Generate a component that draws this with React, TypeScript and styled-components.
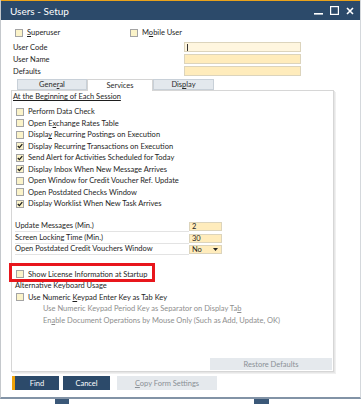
import React from "react";
import styled, { createGlobalStyle } from "styled-components";

const GlobalStyle = createGlobalStyle`
  html, body {
    margin: 0;
    padding: 0;
    background: #ffffff;
  }
  body {
    font-family: Lato, "Liberation Sans", sans-serif;
    font-size: 7.5px;
    color: #1e1e1e;
  }
  u {
    text-underline-offset: 1px;
  }
`;

const Window = styled.div`
  width: 361px;
  height: 399px;
  box-sizing: border-box;
  border-left: 1px solid #c4c8cc;
  border-right: 1px solid #d4d8dc;
  border-bottom: 2px solid #8293a6;
  display: flex;
  flex-direction: column;
  background: #ffffff;
`;

const TitleBar = styled.div`
  height: 20px;
  box-sizing: border-box;
  border-top: 1px solid #e9a21b;
  background: #2c4a6a;
  display: flex;
  align-items: center;
  justify-content: space-between;
  padding: 0 6px 0 9px;
  flex-shrink: 0;
`;

const Title = styled.span`
  color: #ffffff;
  font-size: 10px;
`;

const Controls = styled.div`
  display: flex;
  align-items: center;
  gap: 7px;
`;

const Body = styled.div`
  flex: 1;
  display: flex;
  flex-direction: column;
  padding: 8px 0 0 10px;
`;

const TopRow = styled.div`
  height: 9px;
  display: grid;
  grid-template-columns: 115px auto;
  align-items: center;
  padding-left: 4px;
`;

const CheckItem = styled.label`
  display: flex;
  align-items: center;
  gap: 4px;
  white-space: nowrap;
`;

const Box = styled.span`
  width: 8px;
  height: 8px;
  box-sizing: border-box;
  border: 1px solid #a4a4a4;
  background: #fbf3c9;
  display: inline-flex;
  align-items: center;
  justify-content: center;
  flex-shrink: 0;
`;

const FieldGrid = styled.div`
  margin-top: 5px;
  display: grid;
  grid-template-rows: repeat(3, 10px);
  row-gap: 2px;
`;

const FieldRow = styled.div`
  display: grid;
  grid-template-columns: 171px 117px;
  padding-left: 2px;
  align-items: center;
`;

const Input = styled.div<{ $focus?: boolean }>`
  height: 10px;
  box-sizing: border-box;
  border: 1px solid #dcd4bc;
  background: ${({ $focus }) => ($focus ? "#fff6df" : "#ffecbc")};
  display: flex;
  align-items: center;
  padding-left: 2px;
`;

const Caret = styled.span`
  width: 1px;
  height: 7px;
  background: #333;
`;

const TabStrip = styled.div`
  margin-top: 3px;
  height: 11px;
  display: flex;
  padding-left: 6px;
  position: relative;
  z-index: 1;
`;

const Tab = styled.div<{ $w: number; $active?: boolean }>`
  width: ${({ $w }) => $w}px;
  box-sizing: border-box;
  height: ${({ $active }) => ($active ? 12 : 11)}px;
  display: flex;
  align-items: center;
  justify-content: center;
  background: ${({ $active }) => ($active ? "#ffffff" : "#e3e8ed")};
  border: 1px solid ${({ $active }) => ($active ? "#d4d4d4" : "#c8d0d8")};
  border-bottom: ${({ $active }) => ($active ? "none" : "1px solid #c8d0d8")};
  color: #2a2a2a;
`;

const Panel = styled.div`
  width: 323px;
  height: 282px;
  box-sizing: border-box;
  border: 1px solid #d6d6d6;
  box-shadow: 1px 1px 0 #e6e6e6, 2px 2px 0 #f0f0f0;
  display: flex;
  flex-direction: column;
  padding: 0 1px 1px 0;
`;

const SectionTitle = styled.div`
  height: 12px;
  line-height: 12px;
  padding-left: 1px;
  text-decoration: underline;
  text-underline-offset: 1px;
`;

const CheckList = styled.div`
  margin-top: 3px;
  display: flex;
  flex-direction: column;
`;

const ListRow = styled.div<{ $indent?: number; $muted?: boolean }>`
  height: 11.5px;
  display: flex;
  align-items: center;
  padding-left: ${({ $indent }) => $indent ?? 4}px;
  color: ${({ $muted }) => ($muted ? "#8e8e8e" : "inherit")};
  white-space: nowrap;
  position: relative;
`;

const NumGrid = styled.div`
  margin-top: 11px;
  display: flex;
  flex-direction: column;
`;

const NumRow = styled.div`
  height: 11.75px;
  display: grid;
  grid-template-columns: 174px 33px;
  align-items: center;
  padding-left: 3px;
`;

const NumLabel = styled.div`
  height: 10px;
  line-height: 10px;
  border-bottom: 1px solid #e3e3e3;
`;

const NumInput = styled.div`
  height: 9px;
  box-sizing: border-box;
  border: 1px solid #dcd4bc;
  background: #ffecbc;
  display: flex;
  align-items: center;
  justify-content: space-between;
  padding: 0 3px 0 2px;
  font-size: 7.5px;
`;

const Highlight = styled.div`
  position: absolute;
  left: -3px;
  top: -5.5px;
  width: 146px;
  height: 19px;
  box-sizing: border-box;
  border: 3px solid #e8161c;
  pointer-events: none;
`;

const KeyGroup = styled.div`
  margin-top: 12.5px;
  display: flex;
  flex-direction: column;
`;

const PanelFooter = styled.div`
  margin-top: auto;
  display: flex;
  justify-content: flex-end;
`;

const GrayButton = styled.div<{ $w: number }>`
  width: ${({ $w }) => $w}px;
  height: 12px;
  background: #e5e9ed;
  color: #8a9096;
  display: flex;
  align-items: center;
  justify-content: center;
`;

const ButtonBar = styled.div`
  margin-top: 4px;
  display: flex;
  gap: 4px;
  padding-left: 1px;
`;

const DarkButton = styled.div<{ $accent?: boolean }>`
  width: 47px;
  height: 14px;
  box-sizing: border-box;
  background: #2c4a6a;
  color: #ffffff;
  display: flex;
  align-items: center;
  justify-content: center;
  border-left: ${({ $accent }) => ($accent ? "3px solid #f0a30a" : "none")};
`;

const CopyButton = styled(GrayButton)`
  height: 14px;
  margin-left: 3px;
`;

const BottomStrip = styled.div`
  height: 5px;
  display: flex;
`;

const StripBlock = styled.div<{ $gap: number; $w: number }>`
  margin-left: ${({ $gap }) => $gap}px;
  width: ${({ $w }) => $w}px;
  background: #3b5878;
`;

const Check = ({ on }: { on?: boolean }) => (
  <Box>
    {on && (
      <svg width="6" height="6" viewBox="0 0 6 6">
        <polyline points="0.8,3 2.4,4.6 5.3,1.2" fill="none" stroke="#1c1c1c" strokeWidth="1.3" />
      </svg>
    )}
  </Box>
);

const sessionItems: { label: React.ReactNode; on?: boolean }[] = [
  { label: "Perform Data Check" },
  { label: <>Open E<u>x</u>change Rates Table</> },
  { label: <>Displa<u>y</u> Recurring Postings on Execution</> },
  { label: "Display Recurring Transactions on Execution", on: true },
  { label: "Send Alert for Activities Scheduled for Today", on: true },
  { label: "Display Inbox When New Message Arrives", on: true },
  { label: "Open Window for Credit Voucher Ref. Update" },
  { label: "Open Postdated Checks Window" },
  { label: "Display Worklist When New Task Arrives", on: true },
];

export default function App() {
  return (
    <>
      <GlobalStyle />
      <Window>
        <TitleBar>
          <Title>Users - Setup</Title>
          <Controls>
            <svg width="9" height="9" viewBox="0 0 9 9">
              <rect x="0" y="7" width="9" height="1.6" fill="#ffffff" />
            </svg>
            <svg width="9" height="9" viewBox="0 0 9 9">
              <rect x="0.6" y="0.6" width="7.8" height="7.8" fill="none" stroke="#ffffff" strokeWidth="1.2" />
            </svg>
            <svg width="8" height="8" viewBox="0 0 8 8">
              <path d="M1 1 L7 7 M7 1 L1 7" stroke="#ffffff" strokeWidth="1.6" />
            </svg>
          </Controls>
        </TitleBar>
        <Body>
          <TopRow>
            <CheckItem>
              <Check />
              <span><u>S</u>uperuser</span>
            </CheckItem>
            <CheckItem>
              <Check />
              <span>M<u>o</u>bile User</span>
            </CheckItem>
          </TopRow>
          <FieldGrid>
            <FieldRow>
              <span>User Code</span>
              <Input $focus><Caret /></Input>
            </FieldRow>
            <FieldRow>
              <span>User Name</span>
              <Input />
            </FieldRow>
            <FieldRow>
              <span>Defaults</span>
              <Input />
            </FieldRow>
          </FieldGrid>
          <TabStrip>
            <Tab $w={70}>Gene<u>r</u>al</Tab>
            <Tab $w={66} $active>Services</Tab>
            <Tab $w={61}>Dis<u>p</u>lay</Tab>
          </TabStrip>
          <Panel>
            <SectionTitle>At the Beginning of Each Session</SectionTitle>
            <CheckList>
              {sessionItems.map((item, i) => (
                <ListRow key={i}>
                  <CheckItem>
                    <Check on={item.on} />
                    <span>{item.label}</span>
                  </CheckItem>
                </ListRow>
              ))}
            </CheckList>
            <NumGrid>
              <NumRow>
                <NumLabel>Update Messages (Min.)</NumLabel>
                <NumInput>2</NumInput>
              </NumRow>
              <NumRow>
                <NumLabel>Screen Locking Time (Min.)</NumLabel>
                <NumInput>30</NumInput>
              </NumRow>
              <NumRow>
                <NumLabel>Open Postdated Credit Vouchers Window</NumLabel>
                <NumInput>
                  No
                  <svg width="5" height="3" viewBox="0 0 5 3">
                    <polygon points="0,0 5,0 2.5,3" fill="#222" />
                  </svg>
                </NumInput>
              </NumRow>
            </NumGrid>
            <KeyGroup>
              <ListRow>
                <CheckItem>
                  <Check />
                  <span>Show License Information at Startup</span>
                </CheckItem>
                <Highlight />
              </ListRow>
              <ListRow $indent={3}>Alternative Keyboard Usage</ListRow>
              <ListRow>
                <CheckItem>
                  <Check />
                  <span>Use Numeric <u>K</u>eypad Enter Key as Tab Key</span>
                </CheckItem>
              </ListRow>
              <ListRow $indent={31} $muted>
                Use Numeric Keypad Period Key as Separator on Display Ta<u>b</u>
              </ListRow>
              <ListRow $indent={31} $muted>
                En<u>a</u>ble Document Operations by Mouse Only (Such as Add, Update, OK)
              </ListRow>
            </KeyGroup>
            <PanelFooter>
              <GrayButton $w={122}>Restore Defaults</GrayButton>
            </PanelFooter>
          </Panel>
          <ButtonBar>
            <DarkButton $accent>Find</DarkButton>
            <DarkButton>Cancel</DarkButton>
            <CopyButton $w={100}><span><u>C</u>opy Form Settings</span></CopyButton>
          </ButtonBar>
        </Body>
      </Window>
      <BottomStrip>
        <StripBlock $gap={55} $w={14} />
        <StripBlock $gap={185} $w={15} />
      </BottomStrip>
    </>
  );
}
